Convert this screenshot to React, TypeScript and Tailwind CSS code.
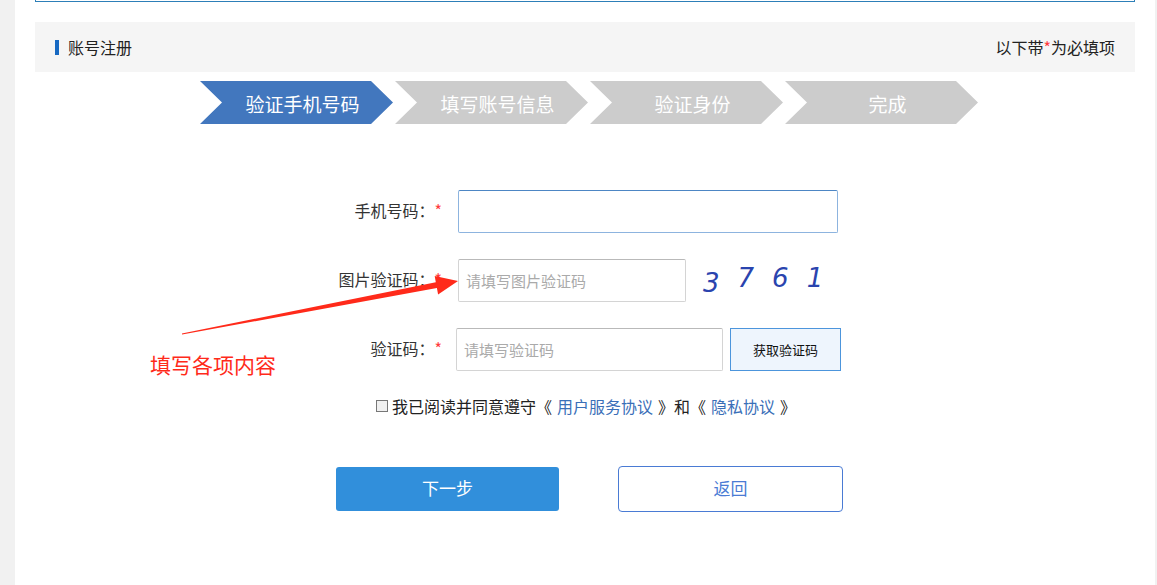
import React from "react";

const font = { fontFamily: '"Noto Sans CJK SC", "Liberation Sans", sans-serif' };

const steps = ["验证手机号码", "填写账号信息", "验证身份", "完成"];

function Step({ label, active }: { label: string; active: boolean }) {
  return (
    <div
      className={`flex h-[43px] w-[193px] items-center justify-center pl-[12px] pt-[3px] text-[19px] text-white ${
        active ? "bg-[#4277be]" : "bg-[#cccccc]"
      }`}
      style={{ clipPath: "polygon(0 0, 171px 0, 100% 50%, 171px 100%, 0 100%, 22px 50%)" }}
    >
      {label}
    </div>
  );
}

function Label({ text }: { text: string }) {
  return (
    <div className="w-[142px] shrink-0 pb-[3px] text-right text-[16px] text-[#333]">
      {text}
      <span className="text-[#ff3b3b]">*</span>
    </div>
  );
}

export default function App() {
  return (
    <div className="relative h-[585px] w-[1157px] overflow-hidden bg-[#f1f1f1]" style={font}>
      <div className="ml-[15px] h-[585px] w-[1140px] bg-white px-[20px]">
        {/* bottom edge of the box above */}
        <div className="h-[2px] border-x border-b border-[#2d7fb8]" />

        {/* page header band */}
        <div className="mt-[20px] flex h-[50px] items-center justify-between bg-[#f5f5f5] pl-[20px] pr-[20px]">
          <div className="flex items-center gap-[9px]">
            <span className="h-[15px] w-[4px] bg-[#1769c2]" />
            <span className="text-[16px] text-[#222]">账号注册</span>
          </div>
          <div className="text-[16px] text-[#222]">
            以下带<span className="text-[#ff3b3b]">*</span>为必填项
          </div>
        </div>

        {/* step indicator */}
        <div className="mt-[9px] flex gap-[2px] pl-[165px]">
          {steps.map((s, i) => (
            <Step key={s} label={s} active={i === 0} />
          ))}
        </div>

        {/* form */}
        <div className="mt-[66px] flex flex-col pl-[265px]">
          <div className="flex items-center gap-[16px]">
            <Label text="手机号码：" />
            <input
              className="h-[43px] w-[380px] rounded-[2px] border border-[#8db4df] border-t-[#4d86c4] px-[8px] text-[15px] outline-none"
            />
          </div>

          <div className="mt-[26px] flex items-center gap-[16px]">
            <Label text="图片验证码：" />
            <input
              placeholder="请填写图片验证码"
              className="h-[43px] w-[228px] rounded-[2px] border border-[#d4d4d4] border-t-[#b9b9b9] px-[7px] text-[15px] outline-none placeholder:text-[#aaaaaa]"
            />
            <div
              className="ml-[1px] flex items-center gap-[18px] pb-[4px] text-[26px] italic text-[#2a44ae]"
              style={{ fontFamily: '"DejaVu Sans", sans-serif' }}
            >
              <span className="translate-y-[5px]">3</span>
              <span>7</span>
              <span>6</span>
              <span>1</span>
            </div>
          </div>

          <div className="mt-[26px] flex items-center gap-[14px]">
            <Label text="验证码：" />
            <input
              placeholder="请填写验证码"
              className="h-[43px] w-[267px] rounded-[2px] border border-[#d4d4d4] border-t-[#b9b9b9] px-[7px] text-[15px] outline-none placeholder:text-[#aaaaaa]"
            />
            <button className="-ml-[7px] h-[43px] w-[111px] border border-[#4c95dc] bg-[#eef5fd] text-[13px] text-[#111]">
              获取验证码
            </button>
          </div>

          <div className="mt-[23px] flex items-center pl-[76px] text-[16px] text-[#222]">
            <span className="mr-[4px] h-[12px] w-[12px] border border-[#777] bg-[#f0f0f0]" />
            我已阅读并同意遵守《
            <span className="mx-[5px] text-[#3a6fb8]">用户服务协议</span>
            》和《
            <span className="mx-[5px] text-[#3a6fb8]">隐私协议</span>》
          </div>

          <div className="mt-[49px] flex items-start gap-[59px] pl-[36px]">
            <button className="h-[44px] w-[223px] rounded-[3px] bg-[#318fdb] pb-[3px] text-[17px] text-white">
              下一步
            </button>
            <button className="-mt-[1px] h-[46px] w-[225px] rounded-[4px] border border-[#4a7bd4] bg-white pb-[3px] text-[17px] text-[#4a7bd4]">
              返回
            </button>
          </div>
        </div>
      </div>

      {/* annotation overlay */}
      <svg className="pointer-events-none absolute left-0 top-0" width="1157" height="585">
        <polygon
          fill="#ff2a1a"
          points="182.1,334.6 436.9,288.1 438.1,294.5 458,281 434.7,276 435.8,282.3 181.9,333.4"
        />
      </svg>
      <div className="absolute left-[150px] top-[350px] text-[21px] leading-[28px] text-[#ff2a1a]">
        填写各项内容
      </div>
    </div>
  );
}
